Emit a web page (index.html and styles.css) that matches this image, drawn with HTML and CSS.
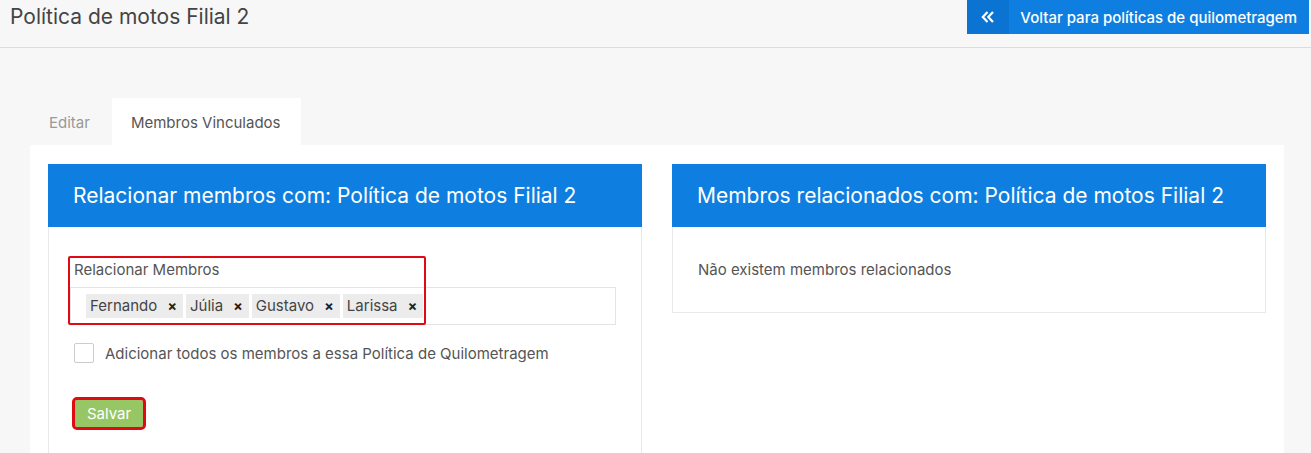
FILE: index.html
```html
<html>
    <head>
        <title>Política de motos Filial 2</title>
        <meta name="viewport" content="width=device-width, initial-scale=1">
        <link rel="stylesheet" href="styles.css">
    </head>
    <body>
        <header class="topbar">
            <h1 class="page-title">Política de motos Filial 2</h1>
            <a class="back-btn" href="#">
                <span class="back-icon">
                    <svg width="14" height="12" viewBox="0 0 14 12">
                        <path d="M6.5 1 L1.8 6 L6.5 11 M12 1 L7.3 6 L12 11" fill="none" stroke="white" stroke-width="2.2"/>
                    </svg>
                </span>
                <span class="back-text">Voltar para políticas de quilometragem</span>
            </a>
        </header>
        <main>
            <nav class="tabs">
                <a class="tab" href="#">Editar</a>
                <a class="tab active" href="#">Membros Vinculados</a>
            </nav>
            <section class="tab-content">
                <div class="panel">
                    <h2 class="panel-heading">Relacionar membros com: Política de motos Filial 2</h2>
                    <div class="panel-body form-body">
                        <div class="form-group">
                            <label class="label">Relacionar Membros</label>
                            <div class="tag-input">
                                <span class="tag">Fernando <b>×</b></span>
                                <span class="tag">Júlia <b>×</b></span>
                                <span class="tag">Gustavo <b>×</b></span>
                                <span class="tag">Larissa <b>×</b></span>
                            </div>
                            <span class="mark"></span>
                        </div>
                        <label class="check">
                            <span class="box"></span>
                            Adicionar todos os membros a essa Política de Quilometragem
                        </label>
                        <button class="save">Salvar</button>
                    </div>
                </div>
                <div class="panel">
                    <h2 class="panel-heading">Membros relacionados com: Política de motos Filial 2</h2>
                    <div class="panel-body empty">Não existem membros relacionados</div>
                </div>
            </section>
        </main>
    </body>
</html>
```

FILE: styles.css
```css
body {
    margin: 0;
    background-color: #f7f7f7;
    font-family: Inter, "Noto Sans", sans-serif;
    color: #555;
    height: 100vh;
    overflow: hidden;
}

.topbar {
    display: flex;
    justify-content: space-between;
    align-items: flex-start;
    height: 47px;
    border-bottom: 1px solid #dcdcdc;
}

.page-title {
    margin: 4px 0 0 10px;
    font-size: 21px;
    font-weight: 400;
    color: #444;
}

.back-btn {
    display: flex;
    height: 34px;
    margin-right: 2px;
    background-color: #0e7fe1;
    color: white;
    text-decoration: none;
    font-size: 15px;
}

.back-icon {
    width: 42px;
    display: flex;
    align-items: center;
    justify-content: center;
    background-color: #0b74d3;
}

.back-text {
    display: flex;
    align-items: center;
    padding: 0 12px 0 11px;
    font-weight: 500;
}

main {
    padding: 50px 27px 0 30px;
}

.tabs {
    display: flex;
    gap: 1px;
}

.tab {
    height: 47px;
    line-height: 49px;
    padding: 0 21px 0 19px;
    font-size: 15px;
    color: #999;
    text-decoration: none;
}

.tab.active {
    background-color: white;
    color: #555;
}

.tab-content {
    display: grid;
    grid-template-columns: 1fr 1fr;
    gap: 30px;
    background-color: white;
    padding: 19px 18px 0;
    height: 400px;
    align-items: start;
}

.panel-heading {
    margin: 0;
    height: 63px;
    line-height: 63px;
    padding-left: 25px;
    background-color: #0e7fe1;
    color: white;
    font-size: 21px;
    font-weight: 400;
}

.panel-body {
    border: 1px solid #e8e8e8;
    border-top: none;
    font-size: 15px;
}

.form-body {
    height: 300px;
    padding: 33px 25px 0 21px;
}

.form-group {
    position: relative;
}

.label {
    display: block;
    margin-left: 4px;
    margin-bottom: 8px;
}

.tag-input {
    display: flex;
    gap: 3px;
    height: 36px;
    align-items: center;
    padding-left: 15px;
    border: 1px solid #e4e4e4;
}

.tag {
    background-color: #ececec;
    color: #444;
    font-size: 15px;
    padding: 2px 6px 3px 4px;
}

.tag b {
    font-size: 14px;
    margin-left: 6px;
    color: #222;
}

.mark {
    position: absolute;
    left: -2px;
    top: -4px;
    width: 354px;
    height: 65px;
    border: 2px solid #e00a14;
    border-radius: 2px;
}

.check {
    display: flex;
    align-items: center;
    gap: 11px;
    margin: 18px 0 0 4px;
}

.box {
    width: 18px;
    height: 18px;
    border: 1px solid #ccc;
    border-radius: 2px;
}

.save {
    display: block;
    margin: 37px 0 0 5px;
    width: 68px;
    height: 27px;
    border: none;
    outline: 3px solid #e00a14;
    border-radius: 2px;
    background-color: #97c664;
    color: white;
    font-family: Inter, sans-serif;
    font-size: 15px;
}

.empty {
    padding: 33px 25px 33px;
}
```
